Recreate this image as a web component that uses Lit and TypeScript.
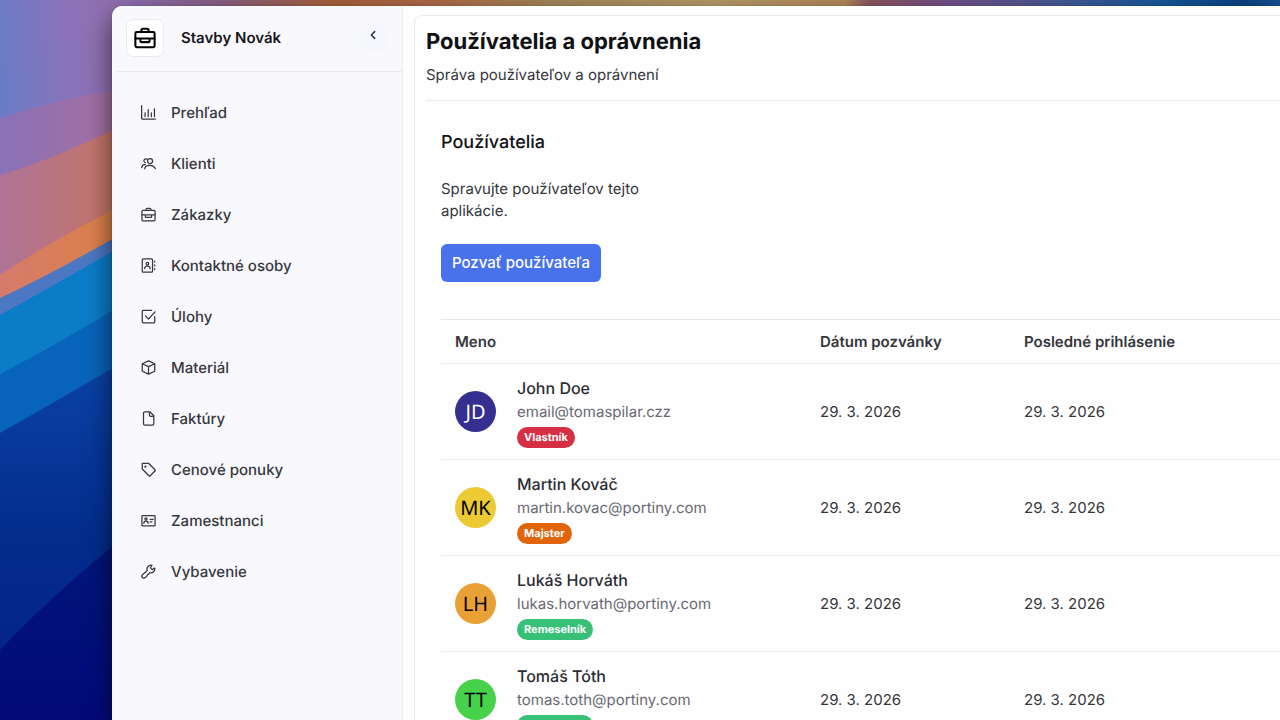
import { LitElement, html, css, svg } from "lit";
import { customElement, property } from "lit/decorators.js";
import { styleMap } from "lit/directives/style-map.js";

const ICONS: Record<string, unknown> = {
  briefcase: svg`<rect x="1.500" y="5.500" width="21" height="16.500" rx="1.500"/><path d="M8 5.500V4a2 2 0 0 1 2-2h4a2 2 0 0 1 2 2v1.500M1.500 12.500h21M7 12.500v3a1 1 0 0 0 1 1h8a1 1 0 0 0 1-1v-3"/>`,
  chart: svg`<path d="M1 1v20a1.500 1.500 0 0 0 1.500 1.500H23M6.500 18.500v-6M11.500 18.500V7.500M16.500 18.500v-6M21.500 18.500V6"/>`,
  people: svg`<circle cx="14.500" cy="8" r="4"/><path d="M6 20.500c0-3.500 3.800-5.500 8.500-5.500 3.500 0 6.500 1.500 8.500 5M9.500 5.200a3 3 0 1 0-2.500 5.300M1 18.500c.5-3 3-5 6-5.200"/>`,
  contacts: svg`<rect x="2" y="1.500" width="16.500" height="21" rx="1.500"/><path d="M22 5v1.500M22 11v1.500M22 17v1.500"/><circle cx="10.300" cy="9" r="2"/><path d="M6 17v-1c0-1.800 1.800-3 4.300-3s4.300 1.200 4.300 3v1"/>`,
  check: svg`<path d="M17 2H3.500A1.500 1.500 0 0 0 2 3.500v17A1.500 1.500 0 0 0 3.500 22h17a1.500 1.500 0 0 0 1.500-1.500V12M7 11l5 5L22.500 4.500"/>`,
  box: svg`<path d="M12 1.500 22 6v12l-10 4.500L2 18V6zM2 6l10 4.500L22 6M12 10.500v12"/>`,
  file: svg`<path d="M14.500 1.500H6a2 2 0 0 0-2 2v17a2 2 0 0 0 2 2h12.500a2 2 0 0 0 2-2V7.500zM13.500 1.500v5a2 2 0 0 0 2 2h5"/>`,
  tag: svg`<path d="M2 2.500v8.700L12.700 22a1.500 1.500 0 0 0 2.100 0l7.500-7.500a1.500 1.500 0 0 0 0-2.100L12.500 2.500A2 2 0 0 0 11 2H2.500a.5.5 0 0 0-.5.500z"/><circle cx="7" cy="7.500" r=".8"/>`,
  idcard: svg`<rect x="1.500" y="4" width="21" height="16.500" rx="1"/><circle cx="8" cy="9.500" r="1.800"/><path d="M4.500 16.500c0-2 1.500-3.500 3.500-3.500s3.500 1.500 3.500 3.500M14.500 10h5M14.500 14h3"/>`,
  wrench: svg`<path d="M22 6.500l-4 2.500-3-3 2.500-4a6.500 6.500 0 0 0-7.500 8.500L2.300 17.200a3 3 0 0 0 4.500 4.500L14 14a6.500 6.500 0 0 0 8-7.500z"/>`,
  chevron: svg`<path d="M16 4 8 12l8 8"/>`,
};

@customElement("app-icon")
export class AppIcon extends LitElement {
  @property() name = "";

  static styles = css`
    :host {
      display: block;
      flex: none;
      width: 16px;
      height: 16px;
    }
    .glyph {
      display: block;
      width: 100%;
      height: 100%;
      fill: none;
      stroke: currentColor;
      stroke-width: var(--icon-stroke, 2);
      stroke-linecap: round;
      stroke-linejoin: round;
    }
  `;

  render() {
    return html`<svg class="glyph" viewBox="0 0 24 24" aria-hidden="true">${ICONS[this.name]}</svg>`;
  }
}

@customElement("desk-wallpaper")
export class DeskWallpaper extends LitElement {
  static styles = css`
    :host {
      display: block;
      overflow: hidden;
      background: linear-gradient(
        90deg,
        #6b7ac4 0%,
        #8a72b8 9%,
        #8b6085 17%,
        #a8613c 26%,
        #b06a48 34%,
        #a58a5c 44%,
        #b99c68 56%,
        #b48a5a 66%,
        #8d5560 68%,
        #74528a 74%,
        #3f5a98 84%,
        #15589c 91%,
        #0b4384 97%,
        #164f92 100%
      );
    }
    .bands {
      display: block;
      width: 130px;
      height: 720px;
    }
  `;

  render() {
    return html`
      <svg class="bands" viewBox="0 0 130 720" aria-hidden="true">
        <defs>
          <linearGradient id="sky" gradientUnits="userSpaceOnUse" x1="0" y1="60" x2="110" y2="50">
            <stop offset="0" stop-color="#6a7cc6" />
            <stop offset="0.600" stop-color="#8973ba" />
            <stop offset="1" stop-color="#9070b0" />
          </linearGradient>
          <linearGradient id="mauve" x1="0" y1="0" x2="1" y2="0">
            <stop offset="0" stop-color="#8a71b8" />
            <stop offset="1" stop-color="#a86f9c" />
          </linearGradient>
          <linearGradient id="rose" x1="0" y1="0" x2="1" y2="0">
            <stop offset="0" stop-color="#ae7397" />
            <stop offset="1" stop-color="#c8755f" />
          </linearGradient>
          <linearGradient id="orange" x1="0" y1="0" x2="1" y2="0">
            <stop offset="0" stop-color="#d67b6c" />
            <stop offset="1" stop-color="#dc8142" />
          </linearGradient>
          <linearGradient id="navy" x1="0" y1="0" x2="0" y2="1">
            <stop offset="0" stop-color="#0a43a6" />
            <stop offset="0.500" stop-color="#032c8c" />
            <stop offset="1" stop-color="#04208a" />
          </linearGradient>
          <linearGradient id="deep" x1="0" y1="0" x2="0" y2="1">
            <stop offset="0" stop-color="#02167c" />
            <stop offset="1" stop-color="#020a78" />
          </linearGradient>
        </defs>
        <path fill="url(#sky)" d="M0 0h130v720H0z" />
        <path fill="url(#mauve)" d="M0 118Q60 98 130 88V720H0z" />
        <path fill="url(#rose)" d="M0 175Q50 161 130 122V720H0z" />
        <path fill="url(#orange)" d="M0 275Q60 235 130 202V720H0z" />
        <path fill="#4b77c3" d="M0 298Q50 275 130 229V720H0z" />
        <path fill="#0b7cc6" d="M0 315Q50 288 130 241V720H0z" />
        <path fill="#0863ba" d="M0 374Q60 343 130 300V720H0z" />
        <path fill="url(#navy)" d="M0 433Q60 399 130 358V720H0z" />
        <path fill="url(#deep)" d="M0 650Q55 592 130 532V720H0z" />
      </svg>
    `;
  }
}

const NAV = [
  ["chart", "Prehľad"],
  ["people", "Klienti"],
  ["briefcase", "Zákazky"],
  ["contacts", "Kontaktné osoby"],
  ["check", "Úlohy"],
  ["box", "Materiál"],
  ["file", "Faktúry"],
  ["tag", "Cenové ponuky"],
  ["idcard", "Zamestnanci"],
  ["wrench", "Vybavenie"],
];

interface User {
  name: string;
  email: string;
  initials: string;
  color: string;
  ink: string;
  role: string;
  roleColor: string;
}

const USERS: User[] = [
  { name: "John Doe", email: "email@tomaspilar.czz", initials: "JD", color: "#352f8f", ink: "#ffffff", role: "Vlastník", roleColor: "#d62e43" },
  { name: "Martin Kováč", email: "martin.kovac@portiny.com", initials: "MK", color: "#ecca33", ink: "#000000", role: "Majster", roleColor: "#e2640a" },
  { name: "Lukáš Horváth", email: "lukas.horvath@portiny.com", initials: "LH", color: "#e9a035", ink: "#000000", role: "Remeselník", roleColor: "#37c077" },
  { name: "Tomáš Tóth", email: "tomas.toth@portiny.com", initials: "TT", color: "#48d14b", ink: "#000000", role: "Remeselník", roleColor: "#37c077" },
];

@customElement("app-root")
export class AppRoot extends LitElement {
  static styles = css`
    :host {
      display: block;
      position: relative;
      box-sizing: border-box;
      height: 100vh;
      overflow: hidden;
      padding: 6px 0 0 112px;
      font-family: Inter, sans-serif;
      font-size: 15px;
      line-height: 22px;
      text-rendering: geometricPrecision;
      color: #35363c;
    }
    * {
      box-sizing: border-box;
    }
    h1,
    h2,
    p {
      margin: 0;
    }
    .wallpaper {
      position: absolute;
      inset: 0;
    }
    .window {
      position: relative;
      display: flex;
      height: 100%;
      border-radius: 10px 0 0 0;
      background: #fefefe;
      box-shadow: 0 0 1px rgba(0, 0, 0, 0.5), 0 10px 26px rgba(0, 0, 0, 0.6);
    }
    .sidebar {
      flex: none;
      width: 291px;
      border-right: 1px solid #ececf0;
      border-radius: 10px 0 0 0;
      background: #f9f9fd;
    }
    .brand {
      display: flex;
      align-items: center;
      height: 66px;
      margin-left: 5px;
      padding: 0 16px 2px 9px;
      border-bottom: 1px solid #e9e9ed;
    }
    .logo {
      display: grid;
      place-items: center;
      width: 38px;
      height: 38px;
      border: 1px solid #ebebee;
      border-radius: 7px;
      background: #ffffff;
      color: #000000;
    }
    .logo app-icon {
      width: 22px;
      height: 22px;
      --icon-stroke: 2.2;
    }
    .company {
      flex: 1;
      margin-left: 17px;
      font-weight: 600;
      color: #16171c;
    }
    .collapse {
      display: flex;
      justify-content: center;
      align-items: flex-start;
      width: 26px;
      height: 26px;
      padding: 5px 0 0;
      border: 0;
      border-radius: 6px;
      background: #f4f7fb;
      color: #33353b;
    }
    .collapse app-icon {
      width: 10px;
      height: 10px;
      --icon-stroke: 3.8;
    }
    .nav {
      display: flex;
      flex-direction: column;
      padding: 15px 12px;
    }
    .link {
      display: flex;
      align-items: center;
      gap: 14px;
      height: 51px;
      padding: 0 17px;
      color: #37383e;
      font-weight: 500;
      text-decoration: none;
    }
    .link app-icon {
      width: 15px;
      height: 15px;
      margin-right: 1px;
    }
    .main {
      flex: 1;
      min-width: 0;
      overflow: hidden;
      padding: 9px 0 0 11px;
    }
    .card {
      height: 100%;
      padding: 12px 0 0 11px;
      border: solid #ececee;
      border-width: 1px 0 0 1px;
      border-radius: 8px 0 0 0;
    }
    .title {
      font-size: 22px;
      line-height: 28px;
      font-weight: 700;
      color: #101114;
    }
    .lead {
      margin-top: 8px;
      padding-bottom: 14px;
      border-bottom: 1px solid #ececee;
    }
    .section {
      padding: 28px 0 0 15px;
    }
    .subtitle {
      font-size: 18px;
      line-height: 28px;
      font-weight: 500;
      color: #101114;
    }
    .hint {
      max-width: 210px;
      margin-top: 21px;
    }
    .invite {
      display: block;
      height: 38px;
      margin: 22px 0 37px;
      padding: 0 11px;
      border: 0;
      border-radius: 6px;
      background: #4871ec;
      color: #ffffff;
      font: inherit;
      font-weight: 500;
    }
    .users {
      width: 100%;
      table-layout: fixed;
      border-collapse: collapse;
      border-top: 1px solid #e6e6e8;
    }
    .col-name {
      width: 365px;
    }
    .col-invited {
      width: 204px;
    }
    .users th,
    .users td {
      padding: 0 14px;
      border-bottom: 1px solid #ececee;
      text-align: left;
      white-space: nowrap;
    }
    .users th {
      height: 44px;
      font-weight: 600;
    }
    .users td {
      height: 96px;
    }
    .person {
      display: flex;
      align-items: center;
      gap: 21px;
    }
    .avatar {
      display: grid;
      place-items: center;
      flex: none;
      width: 41px;
      height: 41px;
      border-radius: 50%;
      font-family: "Noto Sans", sans-serif;
      font-size: 20px;
    }
    .name {
      font-size: 16px;
      line-height: 24px;
      font-weight: 500;
      color: #2c2d33;
    }
    .email {
      line-height: 24px;
      color: #696a72;
    }
    .role {
      display: block;
      width: fit-content;
      margin-top: 3px;
      padding: 0 7px;
      border-radius: 11px;
      color: #ffffff;
      font-size: 11px;
      line-height: 21px;
      font-weight: 700;
    }
  `;

  render() {
    return html`
      <desk-wallpaper class="wallpaper"></desk-wallpaper>
      <div class="window">
        <aside class="sidebar">
          <header class="brand">
            <span class="logo"><app-icon name="briefcase"></app-icon></span>
            <span class="company">Stavby Novák</span>
            <button class="collapse" type="button" aria-label="Zbaliť menu">
              <app-icon name="chevron"></app-icon>
            </button>
          </header>
          <nav class="nav">
            ${NAV.map(
              ([icon, label]) => html`<a class="link" href="#"><app-icon name=${icon}></app-icon>${label}</a>`
            )}
          </nav>
        </aside>
        <main class="main">
          <div class="card">
            <h1 class="title">Používatelia a oprávnenia</h1>
            <p class="lead">Správa používateľov a oprávnení</p>
            <section class="section">
              <h2 class="subtitle">Používatelia</h2>
              <p class="hint">Spravujte používateľov tejto aplikácie.</p>
              <button class="invite" type="button">Pozvať používateľa</button>
              <table class="users">
                <colgroup>
                  <col class="col-name" />
                  <col class="col-invited" />
                  <col />
                </colgroup>
                <thead>
                  <tr>
                    <th scope="col">Meno</th>
                    <th scope="col">Dátum pozvánky</th>
                    <th scope="col">Posledné prihlásenie</th>
                  </tr>
                </thead>
                <tbody>
                  ${USERS.map((user) => this.renderUser(user))}
                </tbody>
              </table>
            </section>
          </div>
        </main>
      </div>
    `;
  }

  private renderUser(user: User) {
    return html`
      <tr>
        <td>
          <div class="person">
            <span class="avatar" style=${styleMap({ background: user.color, color: user.ink })}>${user.initials}</span>
            <div>
              <div class="name">${user.name}</div>
              <div class="email">${user.email}</div>
              <span class="role" style=${styleMap({ background: user.roleColor })}>${user.role}</span>
            </div>
          </div>
        </td>
        <td>29. 3. 2026</td>
        <td>29. 3. 2026</td>
      </tr>
    `;
  }
}
